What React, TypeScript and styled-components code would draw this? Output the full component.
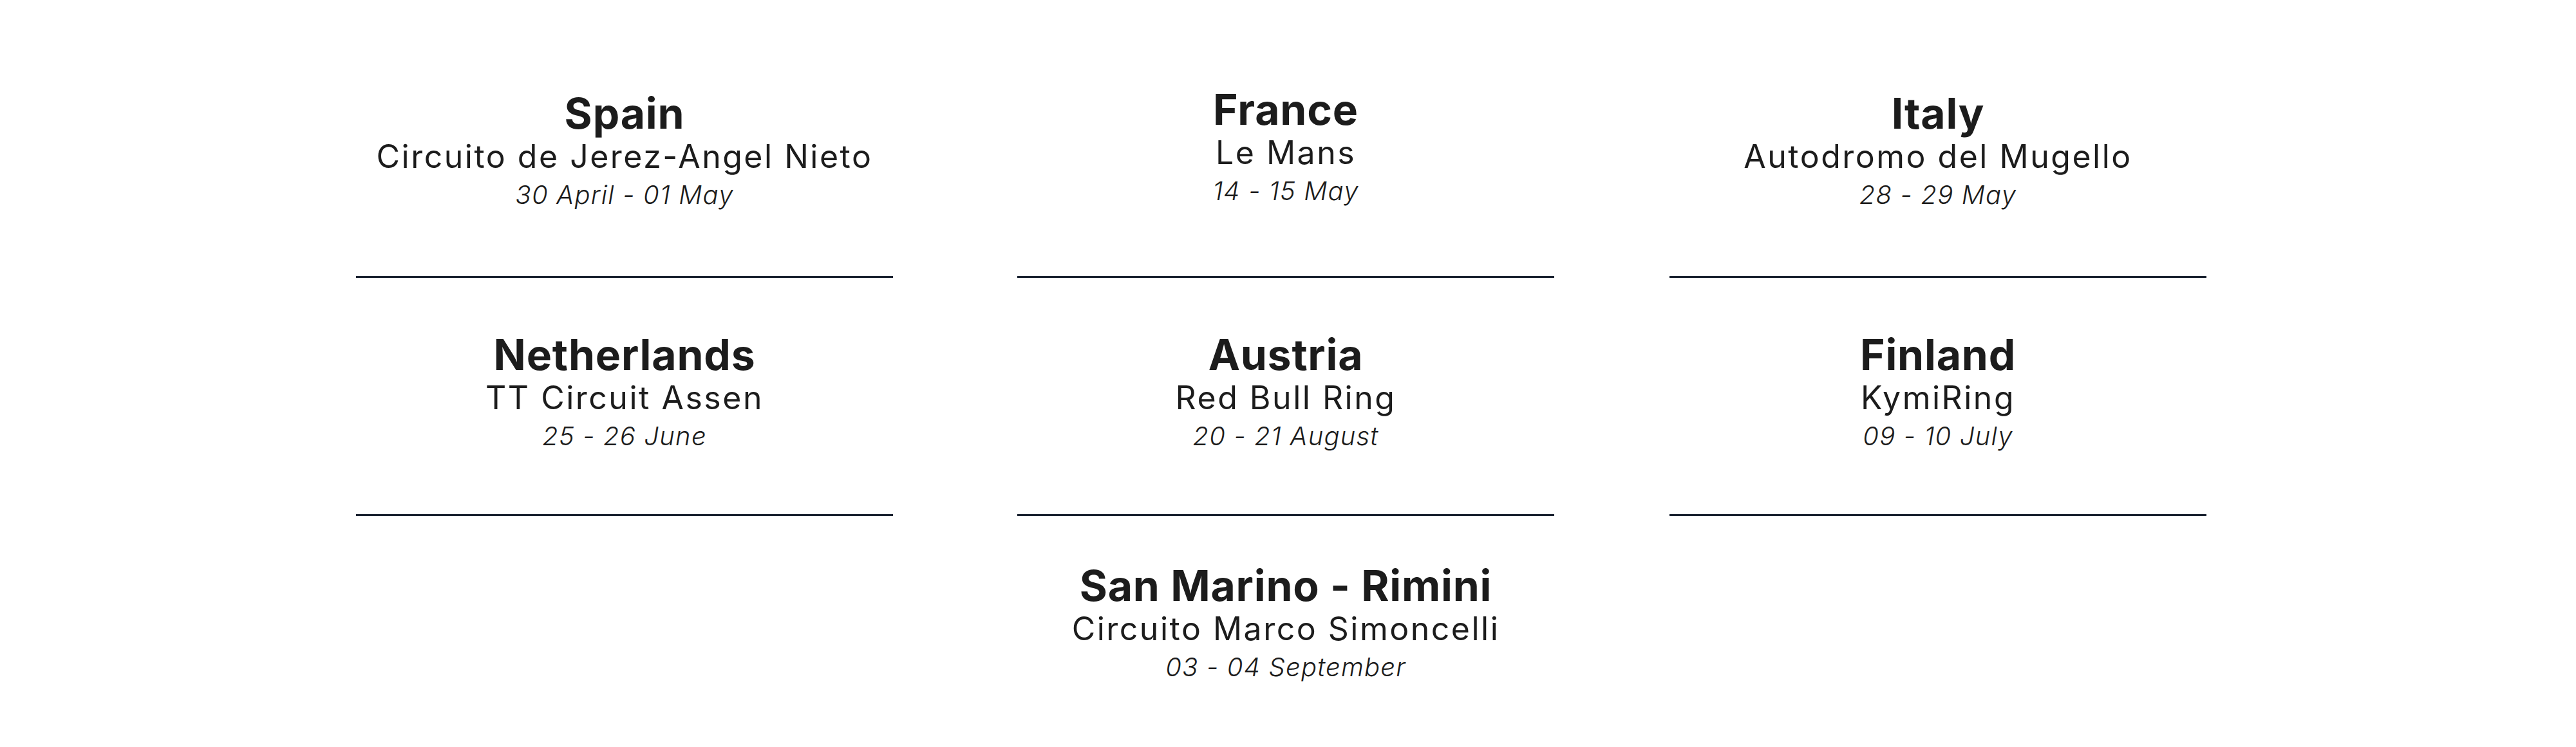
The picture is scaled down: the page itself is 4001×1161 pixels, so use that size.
import styled, { createGlobalStyle } from 'styled-components'

const GlobalStyle = createGlobalStyle`
  html, body {
    margin: 0;
    padding: 0;
    background: #ffffff;
  }
  body {
    font-family: 'Inter', 'Liberation Sans', sans-serif;
    color: #1c1c1c;
  }
`

type Race = {
  country: string
  circuit: string
  dates: string
  raise?: number
  pad?: number
  col?: number
}

const races: Race[] = [
  { country: 'Spain', circuit: 'Circuito de Jerez-Angel Nieto', dates: '30 April - 01 May' },
  { country: 'France', circuit: 'Le Mans', dates: '14 - 15 May', raise: 6 },
  { country: 'Italy', circuit: 'Autodromo del Mugello', dates: '28 - 29 May' },
  { country: 'Netherlands', circuit: 'TT Circuit Assen', dates: '25 - 26 June', pad: 93 },
  { country: 'Austria', circuit: 'Red Bull Ring', dates: '20 - 21 August', pad: 93 },
  { country: 'Finland', circuit: 'KymiRing', dates: '09 - 10 July', pad: 93 },
  { country: 'San Marino - Rimini', circuit: 'Circuito Marco Simoncelli', dates: '03 - 04 September', col: 2, raise: 11 },
]

function App() {
  return (
    <>
      <GlobalStyle />
      <Calendar>
        {races.map((race) => (
          <Card key={race.country} $raise={race.raise ?? 0} $pad={race.pad ?? 98} $col={race.col}>
            <Country>{race.country}</Country>
            <Circuit>{race.circuit}</Circuit>
            <Dates>{race.dates}</Dates>
          </Card>
        ))}
      </Calendar>
    </>
  )
}

export default App

const Calendar = styled.main`
  display: grid;
  grid-template-columns: 1027px 1013px 834px;
  row-gap: 84px;
  padding: 141px 0 0 553px;
`

const Card = styled.section<{ $raise: number; $pad: number; $col?: number }>`
  width: 834px;
  display: flex;
  flex-direction: column;
  align-items: center;
  text-align: center;
  margin-top: ${(p) => -p.$raise}px;
  padding-bottom: ${(p) => p.$pad + p.$raise}px;
  border-bottom: 3px solid #1b2331;
  grid-column: ${(p) => (p.$col ? p.$col : 'auto')};
`

const Country = styled.h2`
  margin: 0;
  font-size: 66px;
  line-height: 70px;
  font-weight: 700;
  letter-spacing: 0.8px;
  color: #1c1c1c;
`

const Circuit = styled.p`
  margin: 0;
  font-size: 50px;
  line-height: 64px;
  font-weight: 400;
  letter-spacing: 2.5px;
  color: #1c1c1c;
`

const Dates = styled.p`
  margin: 0;
  font-size: 40px;
  line-height: 56px;
  font-weight: 300;
  font-style: italic;
  letter-spacing: 1.2px;
  color: #1c1c1c;
`
